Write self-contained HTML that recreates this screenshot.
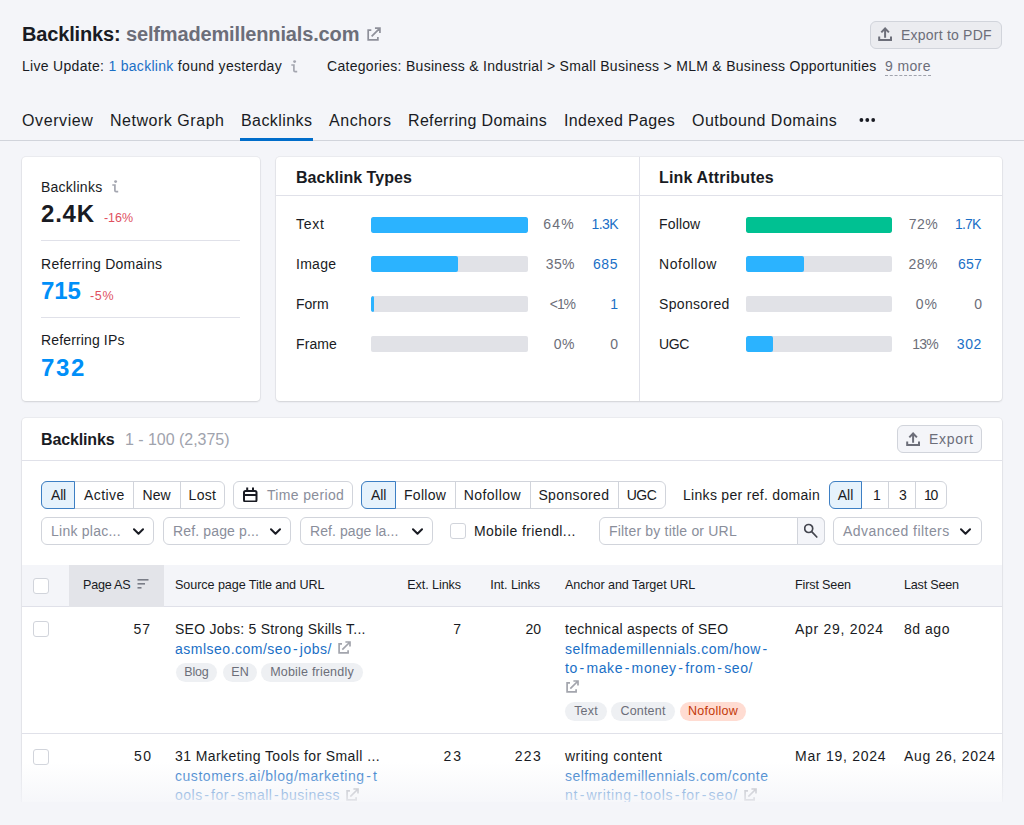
<!DOCTYPE html><html><head><meta charset="utf-8">
<style>
*{box-sizing:border-box;margin:0;padding:0}
html,body{width:1024px;height:825px;overflow:hidden;background:#f4f5f9;font-family:"Liberation Sans",sans-serif;color:#191b23}
.a{position:absolute;white-space:nowrap}
.card{position:absolute;background:#fff;border-radius:4px;box-shadow:0 1px 2px rgba(25,27,35,.12),0 0 0 1px rgba(25,27,35,.04)}
.blue{color:#1a6fc6}
.grey{color:#6c6e79}
.t14{font-size:14px}
.t16{font-size:16px}
.bar{position:absolute;height:16px;background:#e1e2e7;border-radius:2px;overflow:hidden}
.bar i{position:absolute;left:0;top:0;bottom:0;background:#2bb3ff;border-radius:2px}
.r{text-align:right}
.dd{position:absolute;height:28px;border:1px solid #d1d4db;border-radius:6px;background:#fff;font-size:14px;color:#8a8e9b;padding-left:9px;line-height:26px}
.tag{position:absolute;height:19px;border-radius:10px;background:#eef0f3;color:#6c6e79;font-size:12.5px;line-height:19px;text-align:center}
.hy{margin:0 1.6px}
.cb{position:absolute;width:16px;height:16px;border:1px solid #d1d4db;border-radius:3px;background:#fff}
</style></head><body>

<!-- header -->
<div class="a" style="left: 22px; top: 23px; font-size: 20px; font-weight: bold; letter-spacing: -0.15px;">Backlinks: <span style="color:#6c6e79">selfmademillennials.com</span></div>
<svg class="a" style="left:366.5px;top:26.5px" width="14" height="14" viewBox="0 0 13 13" fill="none" stroke="#8e909a" stroke-width="1.58"><path d="M4 2.9H1.1V11.9H10.1V9.2M4.3 8.7 12 1M7.4 1H12V5.6"></path></svg>

<div class="a t14" style="left: 22px; top: 58px; letter-spacing: 0.3px;">Live Update: <span class="blue">1 backlink</span> found yesterday</div>
<svg class="a" style="left:291px;top:60px" width="7" height="13" viewBox="0 0 7 13" fill="none"><circle cx="3.6" cy="1.6" r="1.45" fill="#a4a6b0"></circle><path d="M0.3 5H2.9V10.4Q2.9 11.6 4.1 11.6H6.2" stroke="#a4a6b0" stroke-width="1.7"></path></svg>
<div class="a t14" style="left: 327px; top: 58px; letter-spacing: 0.29px;">Categories: Business &amp; Industrial &gt; Small Business &gt; MLM &amp; Business Opportunities</div>
<div class="a t14" style="left: 885px; top: 58px; color: rgb(108, 110, 121); border-bottom: 1px dashed rgb(160, 163, 173); line-height: 17px; letter-spacing: 0.37px;">9 more</div>

<div class="a" style="left:870px;top:21px;width:132px;height:28px;border:1px solid #d1d4db;border-radius:6px;background:#ebecf0"></div>
<svg class="a" style="left:878px;top:27px" width="15" height="15" viewBox="0 0 15 15" fill="none" stroke="#6c6e79" stroke-width="2"><path d="M3.3 5.4 7.1 1.5 10.9 5.4M7.1 1.8V10.7M1.2 9.6V13H13V9.6"></path></svg>
<div class="a t14" style="left: 901px; top: 27px; color: rgb(108, 110, 121); letter-spacing: 0.22px;">Export to PDF</div>

<!-- tabs -->
<div class="a t16" style="left: 22px; top: 112px; letter-spacing: 0.6px;">Overview</div>
<div class="a t16" style="left: 110px; top: 112px; letter-spacing: 0.53px;">Network Graph</div>
<div class="a t16" style="left: 241px; top: 112px; letter-spacing: 0.42px;">Backlinks</div>
<div class="a t16" style="left: 329px; top: 112px; letter-spacing: 0.55px;">Anchors</div>
<div class="a t16" style="left: 408px; top: 112px; letter-spacing: 0.33px;">Referring Domains</div>
<div class="a t16" style="left: 564px; top: 112px; letter-spacing: 0.34px;">Indexed Pages</div>
<div class="a t16" style="left: 692px; top: 112px; letter-spacing: 0.46px;">Outbound Domains</div>
<svg class="a" style="left:857px;top:116px" width="20" height="8" viewBox="0 0 20 8" fill="#191b23"><circle cx="4.4" cy="4" r="1.9"></circle><circle cx="10.3" cy="4" r="1.9"></circle><circle cx="16.2" cy="4" r="1.9"></circle></svg>
<div class="a" style="left:0;top:140px;width:1024px;height:1px;background:#d1d4db"></div>
<div class="a" style="left:240px;top:138px;width:73px;height:3px;background:#006dca"></div>

<!-- card 1 -->
<div class="card" style="left:22px;top:157px;width:238px;height:244px"></div>
<div class="a t14" style="left: 41px; top: 179px; letter-spacing: 0.25px;">Backlinks</div>
<svg class="a" style="left:112px;top:180px" width="7" height="13" viewBox="0 0 7 13" fill="none"><circle cx="3.6" cy="1.6" r="1.45" fill="#a4a6b0"></circle><path d="M0.3 5H2.9V10.4Q2.9 11.6 4.1 11.6H6.2" stroke="#a4a6b0" stroke-width="1.7"></path></svg>
<div class="a" style="left: 41px; top: 200px; font-size: 24px; font-weight: bold; letter-spacing: 0.8px;">2.4K</div>
<div class="a" style="left: 104px; top: 211px; font-size: 12.5px; color: rgb(224, 80, 95); letter-spacing: -0.06px;">-16%</div>
<div class="a" style="left:41px;top:240px;width:199px;height:1px;background:#e0e1e9"></div>
<div class="a t14" style="left: 41px; top: 256px; letter-spacing: 0.27px;">Referring Domains</div>
<div class="a" style="left: 41px; top: 277px; font-size: 24px; font-weight: bold; color: rgb(0, 143, 248); letter-spacing: -0.12px;">715</div>
<div class="a" style="left: 90px; top: 288.5px; font-size: 12.5px; color: rgb(224, 80, 95); letter-spacing: 0.68px;">-5%</div>
<div class="a" style="left:41px;top:317px;width:199px;height:1px;background:#e0e1e9"></div>
<div class="a t14" style="left: 41px; top: 332px; letter-spacing: 0.14px;">Referring IPs</div>
<div class="a" style="left: 41px; top: 354px; font-size: 24px; font-weight: bold; color: rgb(0, 143, 248); letter-spacing: 1.67px;">732</div>

<!-- card 2 -->
<div class="card" style="left:276px;top:157px;width:726px;height:244px"></div>
<div class="a" style="left:639px;top:157px;width:1px;height:244px;background:#e0e1e9"></div>
<div class="a" style="left:276px;top:195px;width:726px;height:1px;background:#e0e1e9"></div>
<div class="a t16" style="left: 296px; top: 169px; font-weight: bold; letter-spacing: 0.04px;">Backlink Types</div>
<div class="a t16" style="left: 659px; top: 169px; font-weight: bold; letter-spacing: 0.17px;">Link Attributes</div>

<div class="a t14" style="left: 296px; top: 216px; letter-spacing: 0.71px;">Text</div>
<div class="bar" style="left:371px;top:217px;width:157px"><i style="width:157px"></i></div>
<div class="a t14 grey r" style="left: 525px; top: 216px; width: 50px; letter-spacing: 1.24px;">64%</div>
<div class="a t14 blue r" style="left: 568px; top: 216px; width: 50px; letter-spacing: -0.6px;">1.3K</div>

<div class="a t14" style="left: 296px; top: 256px; letter-spacing: 0.27px;">Image</div>
<div class="bar" style="left:371px;top:256px;width:157px"><i style="width:87px"></i></div>
<div class="a t14 grey r" style="left: 525px; top: 256px; width: 50px; letter-spacing: 0.44px;">35%</div>
<div class="a t14 blue r" style="left: 568px; top: 256px; width: 50px; letter-spacing: 0.57px;">685</div>

<div class="a t14" style="left: 296px; top: 296px; letter-spacing: -0.02px;">Form</div>
<div class="bar" style="left:371px;top:296px;width:157px"><i style="width:3px"></i></div>
<div class="a t14 grey r" style="left: 525px; top: 296px; width: 50px; letter-spacing: -1.06px;">&lt;1%</div>
<div class="a t14 blue r" style="left:568px;top:296px;width:50px">1</div>

<div class="a t14" style="left: 296px; top: 336px; letter-spacing: 0.09px;">Frame</div>
<div class="bar" style="left:371px;top:336px;width:157px"></div>
<div class="a t14 grey r" style="left: 525px; top: 336px; width: 50px; letter-spacing: 0.46px;">0%</div>
<div class="a t14 grey r" style="left:568px;top:336px;width:50px">0</div>

<div class="a t14" style="left: 659px; top: 216px; letter-spacing: 0.15px;">Follow</div>
<div class="bar" style="left:746px;top:217px;width:146px"><i style="width:146px;background:#00c192"></i></div>
<div class="a t14 grey r" style="left: 888px; top: 216px; width: 50px; letter-spacing: 0.38px;">72%</div>
<div class="a t14 blue r" style="left: 930.5px; top: 216px; width: 50px; letter-spacing: -0.84px;">1.7K</div>

<div class="a t14" style="left: 659px; top: 256px; letter-spacing: 0.53px;">Nofollow</div>
<div class="bar" style="left:746px;top:256px;width:146px"><i style="width:58px"></i></div>
<div class="a t14 grey r" style="left: 888px; top: 256px; width: 50px; letter-spacing: 0.49px;">28%</div>
<div class="a t14 blue r" style="left: 932px; top: 256px; width: 50px; letter-spacing: 0.21px;">657</div>

<div class="a t14" style="left: 659px; top: 296px; letter-spacing: 0.33px;">Sponsored</div>
<div class="bar" style="left:746px;top:296px;width:146px"></div>
<div class="a t14 grey r" style="left: 888px; top: 296px; width: 50px; letter-spacing: 0.96px;">0%</div>
<div class="a t14 grey r" style="left:932px;top:296px;width:50px">0</div>

<div class="a t14" style="left: 659px; top: 336px; letter-spacing: -0.36px;">UGC</div>
<div class="bar" style="left:746px;top:336px;width:146px"><i style="width:27px"></i></div>
<div class="a t14 grey r" style="left: 888px; top: 336px; width: 50px; letter-spacing: -0.76px;">13%</div>
<div class="a t14 blue r" style="left: 932px; top: 336px; width: 50px; letter-spacing: 0.62px;">302</div>

<!-- table card -->
<div class="card" style="left:22px;top:418px;width:980px;height:420px"></div>
<div class="a t16" style="left: 41px; top: 431px; font-weight: bold; letter-spacing: -0.14px;">Backlinks</div>
<div class="a t16" style="left: 125px; top: 431px; color: rgb(160, 163, 173); letter-spacing: -0.03px;">1 - 100 (2,375)</div>
<div class="a" style="left:22px;top:460px;width:980px;height:1px;background:#e0e1e9"></div>

<div class="a" style="left:897px;top:425px;width:85px;height:28px;border:1px solid #d1d4db;border-radius:6px;background:#f4f5f9"></div>
<svg class="a" style="left:906px;top:432px" width="15" height="15" viewBox="0 0 15 15" fill="none" stroke="#6c6e79" stroke-width="2"><path d="M3.3 5.4 7.1 1.5 10.9 5.4M7.1 1.8V10.7M1.2 9.6V13H13V9.6"></path></svg>
<div class="a t14 grey" style="left: 929px; top: 431px; letter-spacing: 0.71px;">Export</div>


<!-- filters row 1 -->
<div class="a" style="left:41px;top:481px;width:184px;height:28px;border:1px solid #d1d4db;border-radius:6px;background:#fff"></div>
<div class="a" style="left:133px;top:481px;width:1px;height:28px;background:#d1d4db"></div>
<div class="a" style="left:180px;top:481px;width:1px;height:28px;background:#d1d4db"></div>
<div class="a" style="left:41px;top:481px;width:34px;height:28px;border:1px solid #3d7fc4;border-radius:6px 0 0 6px;background:#e6f2fc"></div>
<div class="a t14" style="left: 51px; top: 487px; letter-spacing: -0.19px;">All</div>
<div class="a t14" style="left: 84px; top: 487px; letter-spacing: 0.41px;">Active</div>
<div class="a t14" style="left: 142.4px; top: 487px; letter-spacing: 0.14px;">New</div>
<div class="a t14" style="left: 188.6px; top: 487px; letter-spacing: 0.31px;">Lost</div>
<div class="a" style="left:233px;top:481px;width:120px;height:28px;border:1px solid #d1d4db;border-radius:6px;background:#fff"></div>
<svg class="a" style="left:243px;top:487px" width="15" height="15" viewBox="0 0 15 15" fill="none" stroke="#191b23" stroke-width="2"><rect x="1" y="4" width="12.5" height="10.5" rx="1.5"></rect><path d="M1 8h12.5M4.2 0.5v4.5M10 0.5v4.5"></path></svg>
<div class="a t14" style="left: 267px; top: 487px; color: rgb(138, 142, 155); letter-spacing: 0.34px;">Time period</div>
<div class="a" style="left:361px;top:481px;width:305px;height:28px;border:1px solid #d1d4db;border-radius:6px;background:#fff"></div>
<div class="a" style="left:455px;top:481px;width:1px;height:28px;background:#d1d4db"></div>
<div class="a" style="left:530px;top:481px;width:1px;height:28px;background:#d1d4db"></div>
<div class="a" style="left:618px;top:481px;width:1px;height:28px;background:#d1d4db"></div>
<div class="a" style="left:361px;top:481px;width:35px;height:28px;border:1px solid #3d7fc4;border-radius:6px 0 0 6px;background:#e6f2fc"></div>
<div class="a t14" style="left: 371px; top: 487px; letter-spacing: -0.13px;">All</div>
<div class="a t14" style="left: 404px; top: 487px; letter-spacing: 0.27px;">Follow</div>
<div class="a t14" style="left: 463.7px; top: 487px; letter-spacing: 0.46px;">Nofollow</div>
<div class="a t14" style="left: 538.4px; top: 487px; letter-spacing: 0.36px;">Sponsored</div>
<div class="a t14" style="left: 626.8px; top: 487px; letter-spacing: -0.56px;">UGC</div>
<div class="a t14" style="left: 683px; top: 487px; letter-spacing: 0.3px;">Links per ref. domain</div>
<div class="a" style="left:829px;top:481px;width:118px;height:28px;border:1px solid #d1d4db;border-radius:6px;background:#fff"></div>
<div class="a" style="left:888px;top:481px;width:1px;height:28px;background:#d1d4db"></div>
<div class="a" style="left:915px;top:481px;width:1px;height:28px;background:#d1d4db"></div>
<div class="a" style="left:829px;top:481px;width:33px;height:28px;border:1px solid #3d7fc4;border-radius:6px 0 0 6px;background:#e6f2fc"></div>
<div class="a t14" style="left: 837.7px; top: 487px; letter-spacing: 0.02px;">All</div>
<div class="a t14" style="left:873px;top:487px">1</div>
<div class="a t14" style="left:899px;top:487px">3</div>
<div class="a t14" style="left: 924px; top: 487px; letter-spacing: -1.28px;">10</div>

<!-- filters row 2 -->
<div class="dd" style="left: 41px; top: 517px; width: 113px; letter-spacing: 0.24px;">Link plac...</div>
<svg class="a" style="left:132.5px;top:528px" width="11" height="7" viewBox="0 0 11 7" fill="none" stroke="#191b23" stroke-width="2" stroke-linecap="round" stroke-linejoin="round"><path d="M1 1.3l4.5 4.4 4.5-4.4"></path></svg>
<div class="dd" style="left: 163px; top: 517px; width: 128px; letter-spacing: 0.15px;">Ref. page p...</div>
<svg class="a" style="left:269.5px;top:528px" width="11" height="7" viewBox="0 0 11 7" fill="none" stroke="#191b23" stroke-width="2" stroke-linecap="round" stroke-linejoin="round"><path d="M1 1.3l4.5 4.4 4.5-4.4"></path></svg>
<div class="dd" style="left: 300px; top: 517px; width: 133px; letter-spacing: 0.08px;">Ref. page la...</div>
<svg class="a" style="left:412px;top:528px" width="11" height="7" viewBox="0 0 11 7" fill="none" stroke="#191b23" stroke-width="2" stroke-linecap="round" stroke-linejoin="round"><path d="M1 1.3l4.5 4.4 4.5-4.4"></path></svg>
<div class="cb" style="left:450px;top:523px;"></div>
<div class="a t14" style="left: 474px; top: 523px; letter-spacing: 0.4px;">Mobile friendl...</div>
<div class="dd" style="left: 599px; top: 517px; width: 226px; letter-spacing: 0.19px;">Filter by title or URL</div>
<div class="a" style="left:797px;top:517px;width:28px;height:28px;border:1px solid #d1d4db;border-radius:0 6px 6px 0;background:#f4f5f9"></div>
<svg class="a" style="left:804px;top:523px" width="15" height="16" viewBox="0 0 15 16" fill="none" stroke="#44464f" stroke-width="1.7" stroke-linecap="round"><circle cx="4.7" cy="5.5" r="4"></circle><path d="M7.7 8.6l5.1 5.4"></path></svg>
<div class="dd" style="left: 833px; top: 517px; width: 149px; letter-spacing: 0.44px;">Advanced filters</div>
<svg class="a" style="left:959.5px;top:528px" width="11" height="7" viewBox="0 0 11 7" fill="none" stroke="#191b23" stroke-width="2" stroke-linecap="round" stroke-linejoin="round"><path d="M1 1.3l4.5 4.4 4.5-4.4"></path></svg>

<!-- table header -->
<div class="a" style="left:22px;top:565px;width:980px;height:42px;background:#f4f5f9;border-bottom:1px solid #e0e1e9"></div>
<div class="a" style="left:69px;top:565px;width:95px;height:42px;background:#e3e4e9"></div>
<div class="cb" style="left:33px;top:578px"></div>
<div class="a" style="left: 83px; top: 578px; font-size: 12.6px; letter-spacing: -0.22px;">Page AS</div>
<svg class="a" style="left:137px;top:578.5px" width="12" height="10" viewBox="0 0 11 10" fill="#7a7d87"><rect x="0" y="0" width="11" height="1.6"></rect><rect x="0" y="4" width="7.5" height="1.6"></rect><rect x="0" y="8" width="4" height="1.6"></rect></svg>
<div class="a" style="left: 175px; top: 578px; font-size: 12.6px; letter-spacing: -0.07px;">Source page Title and URL</div>
<div class="a r" style="left: 361px; top: 578px; width: 100px; font-size: 12.6px; letter-spacing: -0.09px;">Ext. Links</div>
<div class="a r" style="left: 440px; top: 578px; width: 100px; font-size: 12.6px; letter-spacing: -0.06px;">Int. Links</div>
<div class="a" style="left: 565px; top: 578px; font-size: 12.6px; letter-spacing: -0.06px;">Anchor and Target URL</div>
<div class="a" style="left: 795px; top: 578px; font-size: 12.6px; letter-spacing: -0.15px;">First Seen</div>
<div class="a" style="left: 904px; top: 578px; font-size: 12.6px; letter-spacing: -0.2px;">Last Seen</div>

<!-- row 1 -->
<div class="cb" style="left:33px;top:621px"></div>
<div class="a t14 r" style="left: 100px; top: 621px; width: 51px; letter-spacing: 0.92px;">57</div>
<div class="a t14" style="left: 175px; top: 621px; letter-spacing: 0.27px;">SEO Jobs: 5 Strong Skills T...</div>
<div class="a t14 blue" style="left: 175px; top: 641px; letter-spacing: 0.5px;">asmlseo.com/seo<span class="hy">-</span>jobs/</div>
<svg class="a" style="left:338px;top:640.5px" width="13" height="13" viewBox="0 0 13 13" fill="none" stroke="#a3a5ad" stroke-width="1.70"><path d="M4 2.9H1.1V11.9H10.1V9.2M4.3 8.7 12 1M7.4 1H12V5.6"></path></svg>
<div class="tag" style="left: 176px; top: 663px; width: 41px; letter-spacing: -0.18px;">Blog</div>
<div class="tag" style="left: 223px; top: 663px; width: 34px; letter-spacing: 0px;">EN</div>
<div class="tag" style="left: 261px; top: 663px; width: 102px; letter-spacing: 0.21px;">Mobile friendly</div>
<div class="a t14 r" style="left:400px;top:621px;width:61px">7</div>
<div class="a t14 r" style="left:480px;top:621px;width:61px">20</div>
<div class="a t14" style="left: 565px; top: 621px; letter-spacing: 0.29px;">technical aspects of SEO</div>
<div class="a t14 blue" style="left: 565px; top: 641px; letter-spacing: 0.51px;">selfmademillennials.com/how<span class="hy">-</span></div>
<div class="a t14 blue" style="left: 565px; top: 660px; letter-spacing: 0.62px;">to<span class="hy">-</span>make<span class="hy">-</span>money<span class="hy">-</span>from<span class="hy">-</span>seo/</div>
<svg class="a" style="left:566px;top:680px" width="13" height="13" viewBox="0 0 13 13" fill="none" stroke="#a3a5ad" stroke-width="1.70"><path d="M4 2.9H1.1V11.9H10.1V9.2M4.3 8.7 12 1M7.4 1H12V5.6"></path></svg>
<div class="tag" style="left: 565px; top: 702px; width: 42px; letter-spacing: 0.16px;">Text</div>
<div class="tag" style="left: 611px; top: 702px; width: 64px; letter-spacing: 0.2px;">Content</div>
<div class="tag" style="left: 680px; top: 702px; width: 66px; background: rgb(255, 220, 210); color: rgb(195, 57, 9); letter-spacing: 0.25px;">Nofollow</div>
<div class="a t14" style="left: 795px; top: 621px; letter-spacing: 0.71px;">Apr 29, 2024</div>
<div class="a t14" style="left: 904px; top: 621px; letter-spacing: 0.53px;">8d ago</div>
<div class="a" style="left:22px;top:733px;width:980px;height:1px;background:#e0e1e9"></div>

<!-- row 2 -->
<div class="cb" style="left:33px;top:749px"></div>
<div class="a t14 r" style="left: 101.5px; top: 748px; width: 51px; letter-spacing: 1.42px;">50</div>
<div class="a t14" style="left: 175px; top: 748px; letter-spacing: 0.41px;">31 Marketing Tools for Small ...</div>
<div class="a t14 blue" style="left: 175px; top: 768px; letter-spacing: 0.54px;">customers.ai/blog/marketing<span class="hy">-</span>t</div>
<div class="a t14 blue" style="left: 175px; top: 787px; letter-spacing: 0.5px;">ools<span class="hy">-</span>for<span class="hy">-</span>small<span class="hy">-</span>business</div>
<svg class="a" style="left:346px;top:787.5px" width="13" height="13" viewBox="0 0 13 13" fill="none" stroke="#a3a5ad" stroke-width="1.70"><path d="M4 2.9H1.1V11.9H10.1V9.2M4.3 8.7 12 1M7.4 1H12V5.6"></path></svg>
<div class="a t14 r" style="left: 402px; top: 748px; width: 61px; letter-spacing: 1.92px;">23</div>
<div class="a t14 r" style="left: 481px; top: 748px; width: 61px; letter-spacing: 1.32px;">223</div>
<div class="a t14" style="left: 565px; top: 748px; letter-spacing: 0.48px;">writing content</div>
<div class="a t14 blue" style="left: 565px; top: 768px; letter-spacing: 0.44px;">selfmademillennials.com/conte</div>
<div class="a t14 blue" style="left: 565px; top: 787px; letter-spacing: 0.67px;">nt<span class="hy">-</span>writing<span class="hy">-</span>tools<span class="hy">-</span>for<span class="hy">-</span>seo/</div>
<svg class="a" style="left:743.5px;top:787.5px" width="13" height="13" viewBox="0 0 13 13" fill="none" stroke="#a3a5ad" stroke-width="1.70"><path d="M4 2.9H1.1V11.9H10.1V9.2M4.3 8.7 12 1M7.4 1H12V5.6"></path></svg>
<div class="a t14" style="left: 795px; top: 748px; letter-spacing: 0.73px;">Mar 19, 2024</div>
<div class="a t14" style="left: 904px; top: 748px; letter-spacing: 0.7px;">Aug 26, 2024</div>

<!-- fade -->
<div class="a" style="left:0;top:762px;width:1024px;height:40px;background:linear-gradient(rgba(244,245,249,0),rgba(244,245,249,.8))"></div>
<div class="a" style="left:0;top:802px;width:1024px;height:23px;background:#f4f5f9"></div>

</body></html>
